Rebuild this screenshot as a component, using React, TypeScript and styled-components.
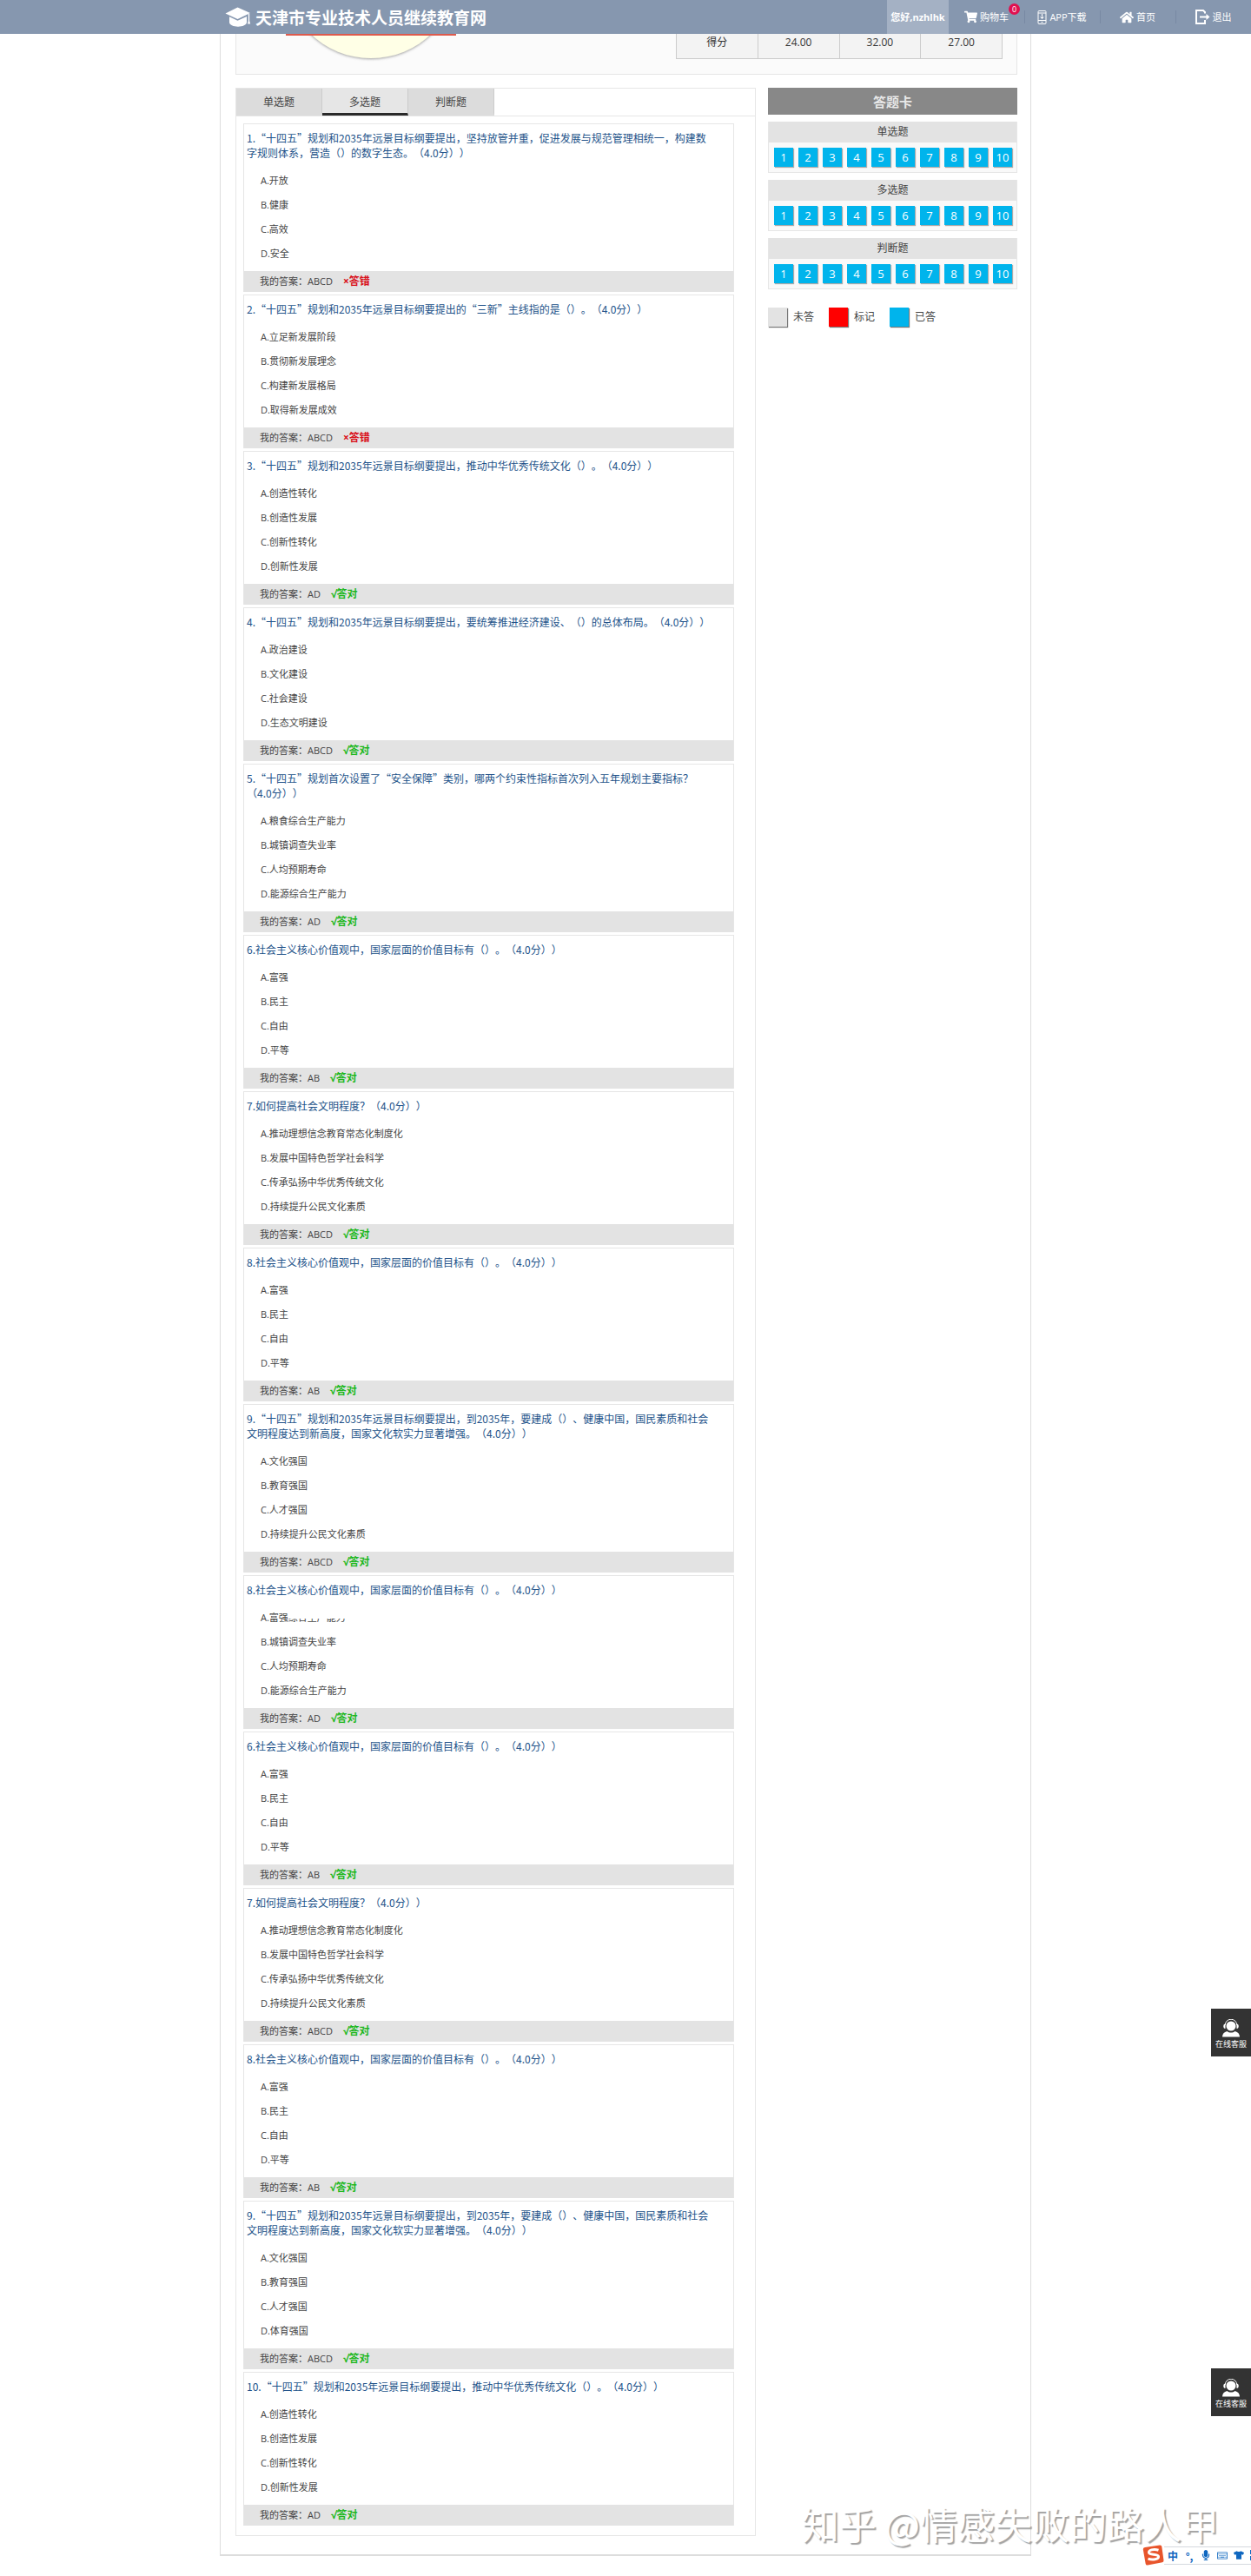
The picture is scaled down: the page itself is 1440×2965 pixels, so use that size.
import React from 'react';
import styled, { createGlobalStyle } from 'styled-components';
import { FaShoppingCart, FaHome, FaMicrophone, FaTshirt, FaRegKeyboard } from 'react-icons/fa';

const cjk = `"Noto Sans CJK SC", sans-serif`;
const mixed = `"Open Sans", "Noto Sans CJK SC", sans-serif`;

const GlobalStyle = createGlobalStyle`
  *, *::before, *::after { box-sizing: border-box; }
  body {
    margin: 0;
    background: #fff;
    color: #444;
    font-family: ${mixed};
    font-size: 12px;
    text-spacing-trim: space-all;
  }
  h1, h2, h3, p, ul, ol { margin: 0; padding: 0; font-weight: normal; }
  ul, ol { list-style: none; }
  a { color: inherit; text-decoration: none; }
  button { border: 0; padding: 0; font: inherit; color: inherit; cursor: pointer; }
`;

const Page = styled.div`
  position: relative;
  padding-bottom: 23px;
  overflow: hidden;
`;

const Header = styled.header`
  display: flex;
  justify-content: space-between;
  height: 39px;
  padding-left: calc((100% - 932px) / 2 + 5px);
  background: #8697af;
  color: #fff;
`;

const Brand = styled.a`
  display: flex;
  align-items: center;
  gap: 5px;
`;

const BrandName = styled.h1`
  font: bold 19px/38px ${cjk};
  white-space: nowrap;
`;

const Nav = styled.nav`
  display: flex;
  font-size: 11px;
  line-height: 39px;
`;

const UserName = styled.a`
  width: 71px;
  background: #a4b1c4;
  font-weight: bold;
  text-align: center;
  white-space: nowrap;
`;

const NavItem = styled.a`
  position: relative;
  display: flex;
  align-items: center;
  justify-content: center;
  gap: 3px;
  width: 87px;
  white-space: nowrap;

  & + &::before {
    content: '';
    position: absolute;
    left: 0;
    top: 12px;
    height: 15px;
    border-left: 1px solid #7889a3;
  }
`;

const Badge = styled.span`
  position: absolute;
  left: 69px;
  top: 4px;
  width: 13px;
  height: 13px;
  border-radius: 50%;
  background: #e0104f;
  font-size: 9px;
  line-height: 13px;
  text-align: center;
`;

const Main = styled.main`
  max-width: 934px;
  margin: 0 auto;
  padding: 0 15px 21px 17px;
  border: solid #ddd;
  border-width: 0 1px 2px;
`;

const ScorePanel = styled.section`
  display: flex;
  justify-content: space-between;
  align-items: flex-start;
  height: 47px;
  margin-bottom: 15px;
  padding: 0 16px 0 57px;
  background: #fbfbfb;
  border: solid #e6e6e6;
  border-width: 0 1px 1px;
`;

const ScoreTable = styled.table`
  border-collapse: collapse;
  table-layout: fixed;
  width: 376px;
  background: #f3f3f3;
  color: #333;
`;

const ScoreCell = styled.td`
  height: 28px;
  padding: 0 0 8px;
  border: solid #ccc;
  border-width: 0 1px 1px;
  font-weight: normal;
  line-height: 18px;
  text-align: center;
`;

const Columns = styled.div`
  display: grid;
  grid-template-columns: 1fr 287px;
  gap: 14px;
  align-items: start;
`;

const ExamPanel = styled.section`
  border: 1px solid #e6e6e6;
`;

const Tabs = styled.div`
  display: flex;
  height: 32px;
  border-bottom: 1px solid #e6e6e6;
`;

const Tab = styled.button<{ $active?: boolean }>`
  width: 99px;
  background: ${(p) => (p.$active ? '#e6e6e6' : '#dcdcdc')};
  border-bottom: 3px solid ${(p) => (p.$active ? '#2a2a2a' : '#dcdcdc')};
  border-right: 1px solid #ccc;
  padding-top: 3px;
  font-size: 12px;
  line-height: 25px;
`;

const QuestionList = styled.ol`
  padding: 8px 24px 8px 8px;
`;

const Question = styled.li`
  margin-bottom: 3px;
  border: solid #e6e6e6;
  border-width: 1px 1px 0;
`;

const QuestionTitle = styled.h3`
  max-width: 538px;
  padding: 7px 0 0 3px;
  margin-bottom: 10px;
  color: #23538a;
  font: 12px/17px ${cjk};
  word-break: break-all;
`;

const Options = styled.ul`
  padding: 0 19px 6px;
  font-size: 11px;
  line-height: 28px;
`;

const Option = styled.li`
  display: flex;
  height: 28px;
`;

const CutText = styled.span`
  clip-path: inset(15px 0 0 0);
`;

const AnswerBar = styled.p`
  display: flex;
  gap: 12px;
  height: 24px;
  padding-left: 18px;
  background: #e3e3e3;
  font-size: 11px;
  line-height: 24px;
`;

const Verdict = styled.strong<{ $right: boolean }>`
  color: ${(p) => (p.$right ? '#1db81d' : '#d9101a')};
  font-size: 12px;
`;

const CardTitle = styled.h2`
  height: 31px;
  background: #888;
  color: #e8e8e8;
  font: bold 15px/31px ${cjk};
  text-align: center;
`;

const CardGroup = styled.section`
  margin-top: 8px;
  border: solid #e6e6e6;
  border-width: 0 1px 1px;
  background: #f9f9f9;
`;

const GroupTitle = styled.h3`
  background: #e3e3e3;
  font-size: 12px;
  line-height: 24px;
  text-align: center;
`;

const Numbers = styled.div`
  display: flex;
  gap: 6px;
  padding: 6px 5px 6px 6px;
`;

const NumberButton = styled.button`
  width: 22px;
  height: 22px;
  background: #00b4ec;
  box-shadow: 1px 1px 1px #aaa;
  color: #fff;
  font-size: 13px;
  line-height: 22px;
`;

const Legend = styled.ul`
  display: flex;
  gap: 17px;
  margin-top: 21px;
`;

const LegendItem = styled.li`
  display: flex;
  gap: 7px;
  line-height: 22px;
`;

const Swatch = styled.span<{ $color: string }>`
  width: 22px;
  height: 22px;
  background: ${(p) => p.$color};
  box-shadow: 1px 1px 1px #777;
`;

const ServiceButton = styled.button<{ $top: number }>`
  position: absolute;
  right: 0;
  top: ${(p) => p.$top}px;
  display: flex;
  flex-direction: column;
  align-items: center;
  width: 46px;
  height: 55px;
  padding-top: 12px;
  background: #333;
  color: #fff;
  font: 9px/16px ${cjk};
  white-space: nowrap;
`;

const Watermark = styled.p`
  position: absolute;
  right: 37px;
  bottom: 31px;
  color: #fff;
  font: 43px/60px ${cjk};
  text-shadow: 2px 2px 1px #a4a4a4;
  white-space: nowrap;
`;

const InputBar = styled.div`
  position: absolute;
  right: 0;
  bottom: 12px;
  display: flex;
  align-items: center;
  width: 125px;
  height: 24px;
  color: #0f67c0;
  overflow: hidden;
`;

const InputTools = styled.div`
  display: flex;
  align-items: center;
  flex: none;
  gap: 7px;
  height: 21px;
  padding-left: 4px;
  background: #fff;
  border: solid #d5d9de;
  border-width: 1px 0;
  font: bold 12px/19px ${cjk};
`;

const ToolButton = styled.button`
  display: flex;
  align-items: center;
  justify-content: center;
  width: 12px;
  background: none;
`;

const LogoDrawing = styled.svg`
  flex: none;
`;

const GraduationCap = () => (
  <svg width="30" height="24" viewBox="0 0 30 24" fill="#fff" aria-hidden="true">
    <path d="M14.5 0.5 29 7 14.5 14 0.5 7.5Z" />
    <path d="M5 11.2 14.5 15.8 25 11v6.5c0 3.2-5 5.2-10 5.2s-10-2-10-5.2Z" />
    <path d="M26.8 8h1.4v8l1 3.500h-3.200l.8-3.500Z" />
  </svg>
);

const PhoneIcon = () => (
  <svg width="11" height="16" viewBox="0 0 11 16" fill="none" stroke="#fff" aria-hidden="true">
    <rect x="1" y="0.5" width="9" height="15" rx="1" />
    <path d="M1 3h9M1 11.500h9M5.500 4v5M3.500 7.500l2 2 2-2M4.500 13.500h2" />
  </svg>
);

const ExitIcon = () => (
  <svg width="17" height="17" viewBox="0 0 17 17" fill="none" stroke="#fff" strokeWidth="2" aria-hidden="true">
    <path d="M11 4.500V3L9 1H1v15h10v-4" />
    <path d="M5 8.500h9" />
    <path d="m12.500 5 4 3.500-4 3.500Z" fill="#fff" stroke="none" />
  </svg>
);

const AgentIcon = () => (
  <svg width="20" height="21" viewBox="0 0 20 21" fill="#fff" aria-hidden="true">
    <circle cx="10" cy="8" r="5.500" />
    <path d="M3.200 7a6.800 6.800 0 0 1 13.600 0" fill="none" stroke="#fff" />
    <path d="M3.500 5.500v5.500C.5 11 .5 5.500 3.500 5.500ZM16.500 5.500v5.500c3 0 3-5.500 0-5.500Z" />
    <path d="M0 20.500c0-3.500 2-5.500 5.500-6.500 2.500 2 6.500 2 9 0 3.500 1 5.500 3 5.500 6.500Z" />
  </svg>
);

const ScoreDial = () => (
  <svg width="196" height="36" viewBox="0 0 196 36" aria-hidden="true">
    <defs>
      <filter id="dialShadow" x="-10%" y="-10%" width="120%" height="120%">
        <feDropShadow dx="0" dy="1" stdDeviation="1.500" floodColor="#777" floodOpacity="0.7" />
      </filter>
    </defs>
    <circle cx="98" cy="-72" r="100" fill="#ffffe6" filter="url(#dialShadow)" />
    <rect width="196" height="2" fill="#de5a4c" />
  </svg>
);

const InputLogo = () => (
  <LogoDrawing width="25" height="24" viewBox="0 0 25 24" aria-hidden="true">
    <path d="M3 3 20 0.500Q22 .3 22.300 2L24.500 18Q24.600 20 23 20.300L6 23.500Q4 23.800 3.700 22L.8 5.500Q.6 3.300 3 3Z" fill="#e8552c" />
    <path d="M18.500 6.200C13 4.500 6.500 6 7.500 9.300c1 3 10.500.7 11 4.200.5 3.300-7 4.500-12 2.700" fill="none" stroke="#fff" strokeWidth="3" />
  </LogoDrawing>
);

type QuestionData = {
  title: string;
  options: string[];
  answer: string;
  wrong?: boolean;
  cutText?: string;
};

const values: QuestionData = {
  title: '社会主义核心价值观中，国家层面的价值目标有（）。（4.0分））',
  options: ['A.富强', 'B.民主', 'C.自由', 'D.平等'],
  answer: 'AB',
};
const civility: QuestionData = {
  title: '7.如何提高社会文明程度？（4.0分））',
  options: ['A.推动理想信念教育常态化制度化', 'B.发展中国特色哲学社会科学', 'C.传承弘扬中华优秀传统文化', 'D.持续提升公民文化素质'],
  answer: 'ABCD',
};
const culture: QuestionData = {
  title: '“十四五”规划和2035年远景目标纲要提出，推动中华优秀传统文化（）。（4.0分））',
  options: ['A.创造性转化', 'B.创造性发展', 'C.创新性转化', 'D.创新性发展'],
  answer: 'AD',
};
const power: QuestionData = {
  title: '9.“十四五”规划和2035年远景目标纲要提出，到2035年，要建成（）、健康中国，国民素质和社会文明程度达到新高度，国家文化软实力显著增强。（4.0分））',
  options: ['A.文化强国', 'B.教育强国', 'C.人才强国', 'D.持续提升公民文化素质'],
  answer: 'ABCD',
};
const numbered = (n: number, q: QuestionData): QuestionData => ({ ...q, title: `${n}.${q.title}` });

const questions: QuestionData[] = [
  {
    title: '1.“十四五”规划和2035年远景目标纲要提出，坚持放管并重，促进发展与规范管理相统一，构建数字规则体系，营造（）的数字生态。（4.0分））',
    options: ['A.开放', 'B.健康', 'C.高效', 'D.安全'],
    answer: 'ABCD',
    wrong: true,
  },
  {
    title: '2.“十四五”规划和2035年远景目标纲要提出的“三新”主线指的是（）。（4.0分））',
    options: ['A.立足新发展阶段', 'B.贯彻新发展理念', 'C.构建新发展格局', 'D.取得新发展成效'],
    answer: 'ABCD',
    wrong: true,
  },
  numbered(3, culture),
  {
    title: '4.“十四五”规划和2035年远景目标纲要提出，要统筹推进经济建设、（）的总体布局。（4.0分））',
    options: ['A.政治建设', 'B.文化建设', 'C.社会建设', 'D.生态文明建设'],
    answer: 'ABCD',
  },
  {
    title: '5.“十四五”规划首次设置了“安全保障”类别，哪两个约束性指标首次列入五年规划主要指标？（4.0分））',
    options: ['A.粮食综合生产能力', 'B.城镇调查失业率', 'C.人均预期寿命', 'D.能源综合生产能力'],
    answer: 'AD',
  },
  numbered(6, values),
  civility,
  numbered(8, values),
  power,
  {
    ...numbered(8, values),
    options: ['A.富强', 'B.城镇调查失业率', 'C.人均预期寿命', 'D.能源综合生产能力'],
    answer: 'AD',
    cutText: '综合生产能力',
  },
  numbered(6, values),
  civility,
  numbered(8, values),
  { ...power, options: ['A.文化强国', 'B.教育强国', 'C.人才强国', 'D.体育强国'] },
  numbered(10, culture),
];

const groups = ['单选题', '多选题', '判断题'];
const legend = [
  { label: '未答', color: '#e3e3e3' },
  { label: '标记', color: '#ff0000' },
  { label: '已答', color: '#00b4ec' },
];

export default function App() {
  return (
    <Page>
      <GlobalStyle />
      <Header>
        <Brand href="#">
          <GraduationCap />
          <BrandName>天津市专业技术人员继续教育网</BrandName>
        </Brand>
        <Nav>
          <UserName href="#">您好,nzhlhk</UserName>
          <NavItem href="#">
            <FaShoppingCart size={15} />
            购物车
            <Badge>0</Badge>
          </NavItem>
          <NavItem href="#">
            <PhoneIcon />
            APP下载
          </NavItem>
          <NavItem href="#">
            <FaHome size={16} />
            首页
          </NavItem>
          <NavItem href="#">
            <ExitIcon />
            退出
          </NavItem>
        </Nav>
      </Header>

      <Main>
        <ScorePanel>
          <ScoreDial />
          <ScoreTable>
            <tbody>
              <tr>
                <ScoreCell as="th" scope="row">得分</ScoreCell>
                <ScoreCell>24.00</ScoreCell>
                <ScoreCell>32.00</ScoreCell>
                <ScoreCell>27.00</ScoreCell>
              </tr>
            </tbody>
          </ScoreTable>
        </ScorePanel>

        <Columns>
          <ExamPanel>
            <Tabs role="tablist">
              {groups.map((name) => (
                <Tab key={name} role="tab" aria-selected={name === '多选题'} $active={name === '多选题'}>
                  {name}
                </Tab>
              ))}
            </Tabs>
            <QuestionList>
              {questions.map((q, i) => (
                <Question key={i}>
                  <QuestionTitle>{q.title}</QuestionTitle>
                  <Options>
                    {q.options.map((text, j) => (
                      <Option key={text}>
                        {text}
                        {j === 0 && q.cutText && <CutText>{q.cutText}</CutText>}
                      </Option>
                    ))}
                  </Options>
                  <AnswerBar>
                    <span>我的答案：{q.answer}</span>
                    <Verdict $right={!q.wrong}>{q.wrong ? '×答错' : '√答对'}</Verdict>
                  </AnswerBar>
                </Question>
              ))}
            </QuestionList>
          </ExamPanel>

          <aside>
            <CardTitle>答题卡</CardTitle>
            {groups.map((name) => (
              <CardGroup key={name}>
                <GroupTitle>{name}</GroupTitle>
                <Numbers>
                  {Array.from({ length: 10 }, (_, n) => (
                    <NumberButton key={n}>{n + 1}</NumberButton>
                  ))}
                </Numbers>
              </CardGroup>
            ))}
            <Legend>
              {legend.map((item) => (
                <LegendItem key={item.label}>
                  <Swatch $color={item.color} />
                  {item.label}
                </LegendItem>
              ))}
            </Legend>
          </aside>
        </Columns>
      </Main>

      <ServiceButton $top={2312}>
        <AgentIcon />
        在线客服
      </ServiceButton>
      <ServiceButton $top={2726}>
        <AgentIcon />
        在线客服
      </ServiceButton>

      <Watermark>知乎 @情感失败的路人甲</Watermark>

      <InputBar>
        <InputLogo />
        <InputTools>
          <ToolButton>中</ToolButton>
          <ToolButton>°,</ToolButton>
          <ToolButton aria-label="语音"><FaMicrophone size={12} /></ToolButton>
          <ToolButton aria-label="键盘"><FaRegKeyboard size={13} /></ToolButton>
          <ToolButton aria-label="皮肤"><FaTshirt size={12} /></ToolButton>
          <ToolButton aria-label="更多">
            <svg width="12" height="12" viewBox="0 0 12 12" fill="#0f67c0" aria-hidden="true">
              <path d="M0 0h5v5H0zM7 0h5v5H7zM0 7h5v5H0zM7 7h5v5H7z" />
            </svg>
          </ToolButton>
        </InputTools>
      </InputBar>
    </Page>
  );
}
